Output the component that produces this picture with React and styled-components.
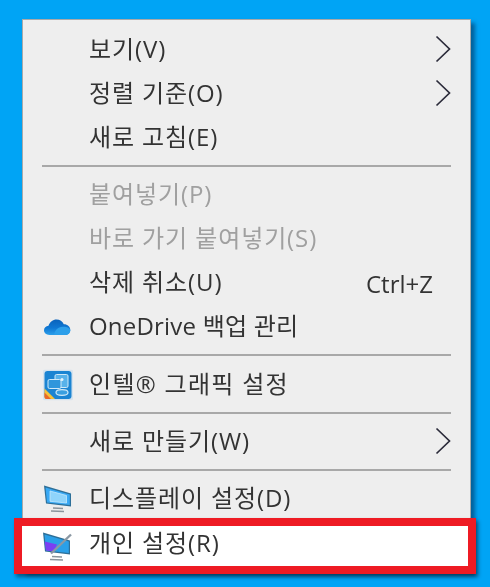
import React from "react";
import styled, { createGlobalStyle } from "styled-components";

const GlobalStyle = createGlobalStyle`
    html, body {
        margin: 0;
        padding: 0;
    }
    body {
        width: 490px;
        height: 587px;
        overflow: hidden;
        background: #00a4f5;
        font-family: "Open Sans", "Noto Sans CJK KR", sans-serif;
    }
`;

const Chevron = () => (
    <ChevronIcon viewBox="0 0 16 28" fill="none">
        <path d="M1.5 1.5 L14.5 14 L1.5 26.5" stroke="#2b2b3a" strokeWidth="1.7" />
    </ChevronIcon>
);

const CloudIcon = () => (
    <svg width="28" height="18" viewBox="0 0 28 18">
        <defs>
            <linearGradient id="cloudFill" x1="0" y1="0" x2="0" y2="1">
                <stop offset="0" stopColor="#0a62bb" />
                <stop offset="0.55" stopColor="#0f78d4" />
                <stop offset="1" stopColor="#2c9fea" />
            </linearGradient>
        </defs>
        <path
            d="M6.500 17 C3 17 1 14.800 1 12.300 C1 9.800 2.900 7.900 5.500 7.700 C6.800 4 9.900 1.500 13.500 1.500 C16.800 1.500 19.500 3.300 20.800 6.200 C24.500 6.100 27.300 8.700 27.300 12 C27.300 15 25 17 22 17 Z"
            fill="url(#cloudFill)"
        />
        <path d="M11 17 C11.500 12.500 15 9 19.500 8.700 C23.500 8.400 27 10 27.300 12 C27.300 15 25 17 22 17 Z" fill="#2c9fea" />
    </svg>
);

const IntelIcon = () => (
    <svg width="30" height="31" viewBox="0 0 30 31">
        <rect x="0" y="0" width="30" height="31" rx="2" fill="#d5e3ee" />
        <rect x="1.500" y="1.500" width="27" height="28" rx="3" fill="#1b84d2" />
        <path d="M1.500 19 L12 29.500 L3.500 29.500 Q1.500 29.500 1.500 27.500 Z" fill="#f4c23a" />
        <path d="M1.500 23 L8 29.500 L3.500 29.500 Q1.500 29.500 1.500 27.500 Z" fill="#e9682a" />
        <rect x="12" y="5" width="13" height="13" rx="1.500" fill="#58b2ea" stroke="#cfe9f8" strokeWidth="1" />
        <rect x="5" y="10" width="13" height="9" rx="1.500" fill="#2f96dc" stroke="#cfe9f8" strokeWidth="1" />
        <ellipse cx="19" cy="23" rx="6" ry="2.800" fill="#3a9fe0" stroke="#cfe9f8" strokeWidth="1.200" />
        <circle cx="19" cy="10" r="1.500" fill="#e6f4fc" />
    </svg>
);

const DisplayIcon = () => (
    <svg width="29" height="29" viewBox="0 0 29 29">
        <path d="M1 1 L28 9 L28 22 L3 19 Z" fill="#2d6f98" />
        <path d="M2.500 3 L26.800 10 L26.800 20.500 L4 18 Z" fill="#38a8f4" />
        <path d="M7 6.500 L23.500 11 L23.500 18.500 L7 16.800 Z" fill="#8fd4fb" stroke="#c3e8fc" strokeWidth="0.800" />
        <path d="M10 23.500 L20 24 M8 26.500 L21 27" stroke="#8a949c" strokeWidth="1.600" />
    </svg>
);

const PersonalizeIcon = () => (
    <svg width="30" height="31" viewBox="0 0 30 31">
        <path d="M1 1 L28 9 L28 23 L3 20 Z" fill="#2d6f98" />
        <path d="M2.500 3 L26.800 10 L26.800 21.500 L4 19 Z" fill="#2aa0e8" />
        <path d="M2.700 10 L15 13 L12 20 L4 19 Z" fill="#7b3ff2" />
        <path d="M9 22 L29 3" stroke="#8b98a3" strokeWidth="2.400" />
        <path d="M10 25 L20 25.500 M8 28 L21 28.500" stroke="#8a949c" strokeWidth="1.600" />
    </svg>
);

const App = () => {
    return (
        <>
            <GlobalStyle />
            <Desktop>
                <Menu>
                    <Row>
                        <Label>보기(V)</Label>
                        <Chevron />
                    </Row>
                    <Row>
                        <Label>정렬 기준(O)</Label>
                        <Chevron />
                    </Row>
                    <Row>
                        <Label>새로 고침(E)</Label>
                    </Row>
                    <Divider />
                    <Row>
                        <Label $disabled>붙여넣기(P)</Label>
                    </Row>
                    <Row>
                        <Label $disabled>바로 가기 붙여넣기(S)</Label>
                    </Row>
                    <Row>
                        <Label>삭제 취소(U)</Label>
                        <Shortcut>Ctrl+Z</Shortcut>
                    </Row>
                    <Row>
                        <IconSlot><CloudIcon /></IconSlot>
                        <Label $spacing="0.2px">OneDrive 백업 관리</Label>
                    </Row>
                    <Divider />
                    <Row $tall>
                        <IconSlot><IntelIcon /></IconSlot>
                        <Label $spacing="1.3px">인텔® 그래픽 설정</Label>
                    </Row>
                    <Divider />
                    <Row>
                        <Label>새로 만들기(W)</Label>
                        <Chevron />
                    </Row>
                    <Divider />
                    <Row>
                        <IconSlot><DisplayIcon /></IconSlot>
                        <Label>디스플레이 설정(D)</Label>
                    </Row>
                    <HighlightRow>
                        <IconSlot><PersonalizeIcon /></IconSlot>
                        <Label>개인 설정(R)</Label>
                    </HighlightRow>
                </Menu>
            </Desktop>
        </>
    );
};

const Desktop = styled.div`
    width: 490px;
    height: 587px;
    padding: 19px 0 0 22px;
    box-sizing: border-box;
    filter: blur(0.35px);
`;

const Menu = styled.div`
    width: 449px;
    height: 552px;
    box-sizing: border-box;
    padding: 8px 0 0;
    background: #eeeeee;
    border: 1px solid #a9a9a9;
    box-shadow: 4px 4px 4px rgba(0, 40, 80, 0.55);
`;

const Row = styled.div`
    position: relative;
    height: ${(props) => (props.$tall ? "45px" : "44px")};
    display: flex;
    align-items: center;
    padding-left: 66px;
`;

const HighlightRow = styled(Row)`
    height: 41px;
    margin: 5px 2px 0 -1px;
    padding: 0 0 5px 67px;
    box-sizing: border-box;
    background: #ffffff;

    &::after {
        content: "";
        position: absolute;
        inset: -8px -8px -7px -8px;
        border: 8px solid #ee1b24;
        box-shadow: 2px 3px 4px rgba(0, 0, 0, 0.45);
        pointer-events: none;
    }
`;

const Label = styled.span`
    font-size: 24px;
    letter-spacing: ${(props) => props.$spacing || "0.9px"};
    line-height: 30px;
    transform: translateY(-1px);
    white-space: nowrap;
    color: ${(props) => (props.$disabled ? "#a0a0a0" : "#333333")};
`;

const Shortcut = styled.span`
    position: absolute;
    left: 343px;
    font-size: 24px;
    color: #333333;
`;

const IconSlot = styled.span`
    position: absolute;
    left: 20px;
    top: 50%;
    transform: translateY(-50%);
    display: flex;
`;

const ChevronIcon = styled.svg`
    position: absolute;
    left: 412px;
    top: calc(50% - 15px);
    width: 16px;
    height: 28px;
`;

const Divider = styled.div`
    height: 2px;
    margin: 5px 19px 6px 19px;
    background: #a8a8a8;
`;

export default App;
